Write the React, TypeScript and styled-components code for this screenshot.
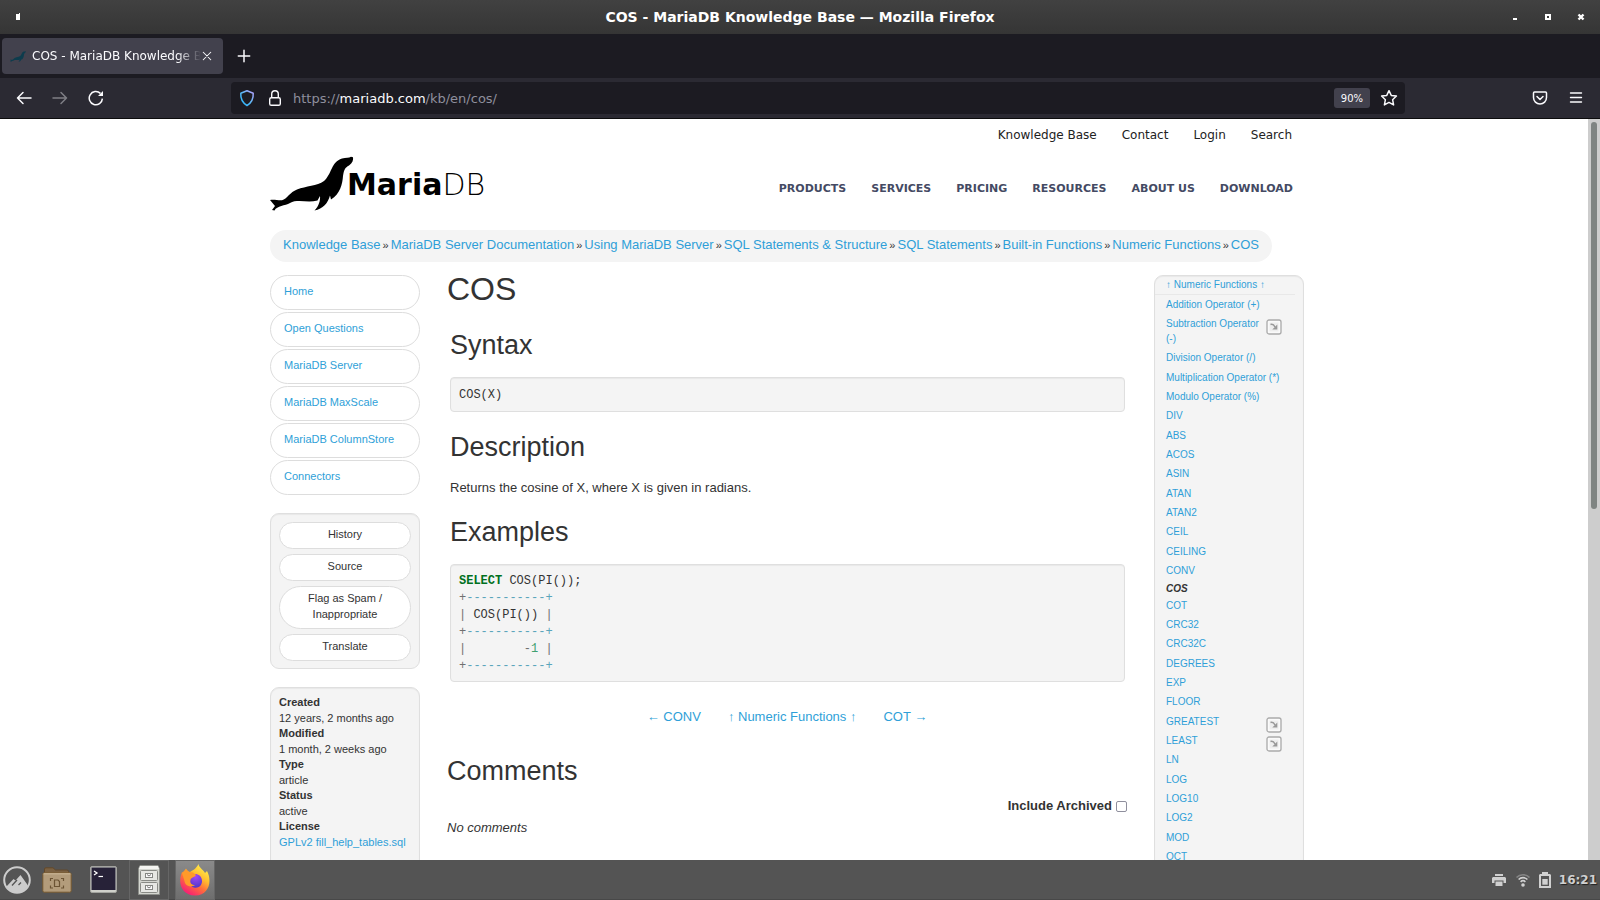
import React from "react";
import styled, { createGlobalStyle, css } from "styled-components";

const GlobalStyle = createGlobalStyle`
  *, *::before, *::after { box-sizing: border-box; }
  body { margin: 0; background: #fff; }
  ul, dl, dd, h1, h2, p, pre { margin: 0; padding: 0; }
  ul { list-style: none; }
  button { font: inherit; color: inherit; background: none; border: 0; padding: 0; }
  a { color: inherit; text-decoration: none; }
`;

const uiFont = `"DejaVu Sans", Verdana, sans-serif`;
const bodyFont = `"Liberation Sans", Arial, Helvetica, sans-serif`;
const link = "#2f9fd8";

/* ---------- window chrome ---------- */

const Desktop = styled.div`
  display: flex;
  flex-direction: column;
  height: 100vh;
  font-family: ${uiFont};
`;

const TitleBar = styled.header`
  display: grid;
  grid-template-columns: 1fr auto 1fr;
  align-items: center;
  flex: none;
  height: 34px;
  padding: 0 15px;
  background: linear-gradient(#414141, #353535);
  color: #fff;
  font-size: 14px;
  font-weight: bold;
`;

const WindowButtons = styled.div<{ $end?: boolean }>`
  display: flex;
  gap: 25px;
  justify-content: ${(p) => (p.$end ? "flex-end" : "flex-start")};
  svg { display: block; }
`;

const TabStrip = styled.div`
  display: flex;
  align-items: center;
  flex: none;
  height: 44px;
  padding: 0 2px;
  background: #1c1b22;
`;

const Tab = styled.div`
  display: flex;
  align-items: center;
  width: 221px;
  height: 36px;
  padding: 0 10px 0 8px;
  border-radius: 4px;
  background: #42414d;
  color: #fbfbfe;
  font-size: 12px;
`;

const TabTitle = styled.span`
  flex: 1;
  min-width: 0;
  margin-left: 6px;
  overflow: hidden;
  white-space: nowrap;
  mask-image: linear-gradient(to left, transparent, #000 24px);
`;

const IconButton = styled.button<{ $dim?: boolean }>`
  display: flex;
  flex: none;
  opacity: ${(p) => (p.$dim ? 0.4 : 1)};
  color: #fbfbfe;
`;

const NewTab = styled(IconButton)`
  margin-left: 14px;
`;

const NavBar = styled.div`
  display: grid;
  grid-template-columns: 231px minmax(0, 1174px) 1fr;
  align-items: center;
  flex: none;
  height: 41px;
  background: #2b2a33;
  border-bottom: 1px solid #0c0c0d;
`;

const NavGroup = styled.div<{ $end?: boolean }>`
  display: flex;
  align-items: center;
  gap: 20px;
  padding: 0 16px;
  justify-content: ${(p) => (p.$end ? "flex-end" : "flex-start")};
`;

const UrlBar = styled.div`
  display: flex;
  align-items: center;
  height: 32px;
  padding: 0 7px 0 8px;
  border-radius: 4px;
  background: #1c1b22;
  color: #fbfbfe;
`;

const UrlText = styled.span`
  flex: 1;
  padding-left: 10px;
  color: #8f8f9d;
  font-size: 13px;
  b { color: #fbfbfe; font-weight: normal; }
`;

const ShieldLock = styled.div`
  display: flex;
  gap: 12px;
`;

const ZoomBadge = styled.button`
  height: 20px;
  margin-right: 10px;
  padding: 0 7px;
  border-radius: 3px;
  background: #42414d;
  font-size: 10px;
`;

/* ---------- page ---------- */

const Viewport = styled.div`
  display: flex;
  flex: 1;
  min-height: 0;
`;

const PageScroll = styled.div`
  flex: 1;
  min-width: 0;
  overflow: hidden;
  background: #fff;
  color: #333;
  font-family: ${bodyFont};
  font-size: 13px;
  line-height: 18px;
`;

const ScrollTrack = styled.div`
  flex: none;
  width: 12px;
  padding: 3px;
  background: #cdcdcd;
`;

const ScrollThumb = styled.div`
  height: 387px;
  border-radius: 3px;
  background: #7f8482;
`;

const Container = styled.div`
  max-width: 1048px;
  margin: 0 auto;
`;

const TopMenu = styled.nav`
  display: flex;
  justify-content: flex-end;
  align-items: center;
  gap: 25px;
  height: 32px;
  padding-right: 26px;
  color: #222;
  font-family: ${uiFont};
  font-size: 12px;
`;

const SiteHeader = styled.div`
  display: flex;
  justify-content: space-between;
  padding: 5px 25px 19px 0;
  svg { display: block; }
`;

const MainMenu = styled.nav`
  display: flex;
  align-items: center;
  gap: 25px;
  padding-top: 10px;
  color: #444a63;
  font-family: ${uiFont};
  font-size: 11px;
  font-weight: bold;
`;

const Breadcrumbs = styled.nav`
  display: inline-flex;
  gap: 2px;
  height: 32px;
  margin-bottom: 13px;
  padding: 6px 13px;
  border-radius: 16px;
  background: #f4f4f4;
  white-space: nowrap;
  vertical-align: top;
  span { font-size: 11px; }
`;

const Link = styled.a`
  color: ${link};
`;

const Columns = styled.div`
  display: grid;
  grid-template-columns: 150px minmax(0, 1fr) 150px;
  column-gap: 27px;
  align-items: start;
  padding-right: 14px;
`;

const SideNav = styled.ul`
  display: grid;
  gap: 2px;
  margin-bottom: 18px;
`;

const SideLink = styled.a`
  display: block;
  height: 35px;
  padding: 6px 13px;
  border: 1px solid #ddd;
  border-radius: 18px;
  color: ${link};
  font-size: 11px;
`;

const well = css`
  border: 1px solid #dfdfdf;
  border-radius: 9px;
  background: #f4f4f4;
  box-shadow: inset 0 1px 1px rgba(0, 0, 0, 0.05);
`;

const Actions = styled.div`
  ${well}
  display: grid;
  gap: 5px;
  margin-bottom: 18px;
  padding: 8px 8px 7px;
`;

const ActionButton = styled.button`
  min-height: 27px;
  padding: 3px 20px 6px;
  border: 1px solid #ddd;
  border-radius: 22px;
  background: #fff;
  font-size: 11px;
  line-height: 16px;
`;

const Meta = styled.dl`
  ${well}
  min-height: 240px;
  padding: 7px 8px;
  font-size: 11px;
  dt { font-weight: bold; line-height: 15px; }
  dd { line-height: 16px; }
`;

const Title = styled.h1`
  font-size: 32px;
  line-height: 28px;
  font-weight: normal;
`;

const Heading = styled.h2`
  font-size: 27px;
  line-height: 32px;
  font-weight: normal;
`;

const Article = styled.article`
  padding: 7px 2px 0 3px;
  ${Heading} { margin: 19px 0 16px; }
`;

const Code = styled.pre`
  padding: 9px 8px 7px;
  border: 1px solid #dfdfdf;
  border-radius: 4px;
  background: #f4f4f4;
  box-shadow: inset 0 1px 1px rgba(0, 0, 0, 0.05);
  font-family: "Liberation Mono", "Courier New", monospace;
  font-size: 12px;
  line-height: 17px;
`;

const Query = styled(Code)`
  padding: 8px 8px 6px;
`;

const tokenColors = { key: "#007020", op: "#5aa5bb", num: "#40a070", sym: "#707070" };

const Token = styled.span<{ $kind: keyof typeof tokenColors }>`
  color: ${(p) => tokenColors[p.$kind]};
  font-weight: ${(p) => (p.$kind === "key" ? "bold" : "normal")};
`;

const Pager = styled.nav`
  display: flex;
  justify-content: center;
  gap: 27px;
  margin: 26px 0 29px;
`;

const Archived = styled.label`
  display: flex;
  justify-content: flex-end;
  align-items: center;
  gap: 4px;
  margin: 10px 0 4px;
  font-weight: bold;
  input {
    appearance: none;
    width: 11px;
    height: 11px;
    margin: 0;
    border: 1px solid #8f8f9d;
    border-radius: 2px;
    background: #fff;
  }
`;

const Index = styled.aside`
  ${well}
  height: 700px;
  font-size: 10px;
  line-height: 15px;
`;

const IndexTop = styled.a`
  display: block;
  height: 19px;
  margin-right: 8px;
  padding: 1px 11px;
  border-bottom: 1px solid #e8e8e8;
  color: ${link};
`;

const IndexItem = styled.li<{ $current?: boolean }>`
  display: flex;
  justify-content: space-between;
  padding: 2px 21px 2px 11px;
  color: ${link};
  &:nth-child(3n) { padding-bottom: 3px; }
  svg { flex: none; margin: 3px 0 -4px; }
  ${(p) => p.$current && css`
    && { padding-top: 1px; padding-bottom: 0; }
    color: #333;
    font-weight: bold;
    font-style: italic;
  `}
`;

/* ---------- taskbar ---------- */

const TaskBar = styled.footer`
  display: flex;
  align-items: center;
  justify-content: space-between;
  flex: none;
  height: 40px;
  padding-right: 3px;
  background: #545454;
  border-bottom: 1px solid #484848;
`;

const Launchers = styled.div`
  display: flex;
  align-items: center;
  gap: 6px;
`;

const Launcher = styled.button<{ $state?: "open" | "active" }>`
  display: flex;
  align-items: center;
  justify-content: center;
  width: 40px;
  height: 40px;
  border: 1px solid ${(p) => (p.$state ? "#666" : "transparent")};
  background: ${(p) => (p.$state === "active" ? "linear-gradient(#8a8a8a, #6e6e6e)" : "none")};
`;

const StartButton = styled(Launcher)`
  width: 34px;
  margin-right: -3px;
`;

const Tray = styled.div`
  display: flex;
  align-items: center;
  gap: 8px;
  color: #d0d0d0;
  font-size: 12px;
  font-weight: bold;
  text-shadow: 1px 1px 1px #222;
`;

/* ---------- drawings ---------- */

const SEAL =
  "M0 44 C4 43 7 44.5 12 44.3 C17 43 20 36 27 33.5 C36 30 47 30 54 25 C62 18 61 6 72 2.5 C76 1.5 79 2 81 .7 L83 1.3 C83.5 4 82.5 7 79 9.5 C75 11.5 74 14 73 20 C72.5 28 70 38 61 43.5 L60 39.5 C58 47 53 53 44.5 54.5 C49 50 50.5 44 50 40 L47.5 44.5 C38 47 27 43 20 47 C15 50 7 49.5 4.5 54.5 L2 54 L5 50 Z";

const Seal = ({ width, height, fill }: { width: number; height: number; fill: string }) => (
  <svg width={width} height={height} viewBox="0 0 84 55" preserveAspectRatio="none">
    <path d={SEAL} fill={fill} />
  </svg>
);

const Logo = () => (
  <svg width="222" height="55" viewBox="0 0 222 55" role="img" aria-label="MariaDB">
    <path d={SEAL} fill="#000" />
    <text x="77" y="39" fontFamily="DejaVu Sans" fontSize="30" fontWeight="bold">
      Maria<tspan fontWeight="200">DB</tspan>
    </text>
  </svg>
);

const Stroke = ({ size = 16, d, width = 1.5 }: { size?: number; d: string; width?: number }) => (
  <svg width={size} height={size} viewBox="0 0 16 16" fill="none" stroke="currentColor"
    strokeWidth={width} strokeLinecap="round" strokeLinejoin="round">
    <path d={d} />
  </svg>
);

const Shield = () => (
  <svg width="16" height="18" viewBox="0 0 16 18" fill="none">
    <defs>
      <linearGradient id="shield" x1="0" y1="1" x2="1" y2="0">
        <stop offset="0" stopColor="#1fb6ff" />
        <stop offset="0.5" stopColor="#5cb8f5" />
        <stop offset="1" stopColor="#b8a0ff" />
      </linearGradient>
    </defs>
    <path d="M8 1.7 L14.2 4.2 C14.6 10 12 14 8 16.5 C4 14 1.4 10 1.8 4.2 Z"
      stroke="url(#shield)" strokeWidth="1.5" strokeLinejoin="round" />
  </svg>
);

const Lock = () => (
  <svg width="16" height="18" viewBox="0 0 16 18" fill="none" stroke="currentColor" strokeWidth="1.4">
    <rect x="2.7" y="8.7" width="10.6" height="7.6" rx="1.6" />
    <path d="M4.7 8.7 V5 a3.3 3.3 0 0 1 6.6 0 V8.7" />
  </svg>
);

const Reload = () => (
  <svg width="16" height="16" viewBox="0 0 16 16" fill="none" stroke="currentColor" strokeWidth="1.5">
    <path d="M14.4 8.6 A6.6 6.6 0 1 1 12.4 3.4" />
    <path d="M15 1 V6 H10 Z" fill="currentColor" stroke="none" />
  </svg>
);

const JumpIcon = () => (
  <svg width="16" height="16" viewBox="0 0 16 16" fill="none">
    <rect x="1" y="1" width="14" height="14" rx="2" fill="#fafafa" stroke="#aaa" strokeWidth="1.3" />
    <rect x="3.5" y="3.5" width="9" height="9" fill="#eee" />
    <path d="M4.5 5.5 C6.5 4.8 8 6 9 8" stroke="#999" strokeWidth="1.5" />
    <path d="M11.3 5.5 V10.5 H6.3 Z" fill="#999" />
  </svg>
);

const Cinnamon = () => (
  <svg width="28" height="28" viewBox="0 0 28 28">
    <circle cx="14" cy="14" r="12.8" fill="none" stroke="#ccc" strokeWidth="2" />
    <path d="M3.5 20.5 L10.5 13 L12.5 14.5 L17.5 9 L25 19.5 A12 12 0 0 1 5 22.5 Z" fill="#ccc" />
    <path d="M9 19.5 L14 14 M15.5 19 L18 16.5" stroke="#545454" strokeWidth="1.3" />
  </svg>
);

const Folder = () => (
  <svg width="30" height="26" viewBox="0 0 30 26">
    <path d="M2.5 7 V2 Q2.5 .8 4 .8 H11 L13.5 3 H25 Q26.5 3 26.5 4.5 V8 Z" fill="#7b6142" stroke="#62482a" />
    <rect x=".8" y="5.8" width="28.4" height="19.4" rx="1.5" fill="#b39c7b" stroke="#76592f" />
    <path d="M1.5 6.8 H28.5" stroke="#d0bd9c" />
    <path d="M8.5 14 V11.5 H11 M19 11.5 H21.5 V14 M21.5 18.5 V21 H19 M11 21 H8.5 V18.5 M12.5 13 H16 L17.5 14.5 V19.5 H12.5 Z"
      fill="none" stroke="#6c5434" strokeWidth="1.2" />
  </svg>
);

const Terminal = () => (
  <svg width="27" height="27" viewBox="0 0 27 27">
    <rect x=".5" y=".5" width="26" height="26" rx="1.5" fill="#cfd0ca" stroke="#a3a49f" />
    <rect x="1.5" y="1.5" width="24" height="22.5" fill="#272238" />
    <path d="M4 5 L7 7 L4 9" fill="none" stroke="#fff" strokeWidth="1.3" />
    <path d="M8.5 10.5 H13" stroke="#fff" strokeWidth="1.2" />
  </svg>
);

const Cabinet = () => (
  <svg width="24" height="32" viewBox="0 0 24 32">
    <path d="M3 1.5 H21 L22.5 5 V30.5 H1.5 V5 Z" fill="#d4d6d0" stroke="#8d8f8a" />
    <path d="M3 2 H21 L22 5 H2 Z" fill="#f4f4f1" />
    {[6.5, 18.5].map((y) => (
      <g key={y}>
        <rect x="3.5" y={y} width="17" height="10" rx="1" fill="#e6e7e3" stroke="#888a85" />
        <rect x="8.5" y={y + 3} width="7" height="4" fill="#fafafa" stroke="#858783" />
        <path d={`M10 ${y + 4} L12 ${y + 5.5} L14 ${y + 4}`} fill="none" stroke="#777" />
      </g>
    ))}
  </svg>
);

const Firefox = () => (
  <svg width="32" height="32" viewBox="0 0 32 32">
    <defs>
      <linearGradient id="flame" x1=".85" y1=".05" x2=".25" y2="1">
        <stop offset="0" stopColor="#fff44f" />
        <stop offset=".35" stopColor="#ffbd2f" />
        <stop offset=".6" stopColor="#ff7139" />
        <stop offset="1" stopColor="#f5157c" />
      </linearGradient>
      <radialGradient id="globe" cx=".5" cy=".2" r=".8">
        <stop offset="0" stopColor="#a347f5" />
        <stop offset="1" stopColor="#4f38c9" />
      </radialGradient>
    </defs>
    <path d="M19.5 0 C20 4 25 6 26 9 L28 7 C33 16 31 31 16 31.5 C4 31 -1 21 2 11 L3 8 L4.5 9 L7 4.5 C7.5 6.5 9 7.5 11 8 C14 6 17 5 19.5 0 Z"
      fill="url(#flame)" />
    <path d="M11 12 C15 8 23 10 23 17 C23 22 19 24.5 15 23.5 C11 22.5 9.5 19 10.5 16.5 Z" fill="url(#globe)" />
    <path d="M3 9 L7 5 L10 8 L14 8.5 L17 11 C15 14 12 13 11.5 16 C10.5 19 13 21 16 21 C12 24 6 22 5.5 17 Z" fill="#ff9a2a" />
  </svg>
);

const Printer = () => (
  <svg width="16" height="14" viewBox="0 0 16 14" fill="currentColor">
    <path d="M4 1 H12 V3 H4 Z M2 4 H14 L15 5 V10 H12.5 V7.5 H3.5 V10 H1 V5 Z M4.5 8.5 H11.5 V13 H4.5 Z" />
  </svg>
);

const Wifi = () => (
  <svg width="16" height="14" viewBox="0 0 16 14" fill="none" stroke="currentColor" strokeWidth="1.6">
    <path d="M1.5 4.5 C5 .8 11 .8 14.5 4.5" opacity=".4" />
    <path d="M3.6 6.5 C6 4 10 4 12.4 6.5 M5.6 8.8 C7 7.5 9 7.5 10.4 8.8" />
    <circle cx="8" cy="12" r="1.8" fill="currentColor" stroke="none" />
  </svg>
);

const Battery = () => (
  <svg width="12" height="16" viewBox="0 0 12 16" fill="currentColor">
    <path fillRule="evenodd" d="M3 0 H9 V2 H11 L12 3 V16 H0 V3 L1 2 H3 Z M2 4 V14 H10 V4 Z" />
    <path d="M3.3 7 H8.7 V12.7 H3.3 Z" />
  </svg>
);

/* ---------- content ---------- */

const crumbs = [
  "Knowledge Base", "MariaDB Server Documentation", "Using MariaDB Server", "SQL Statements & Structure",
  "SQL Statements", "Built-in Functions", "Numeric Functions", "COS",
];

const sideLinks = ["Home", "Open Questions", "MariaDB Server", "MariaDB MaxScale", "MariaDB ColumnStore", "Connectors"];

const functions = [
  "Addition Operator (+)", "Subtraction Operator (-)", "Division Operator (/)", "Multiplication Operator (*)",
  "Modulo Operator (%)", "DIV", "ABS", "ACOS", "ASIN", "ATAN", "ATAN2", "CEIL", "CEILING", "CONV", "COS", "COT",
  "CRC32", "CRC32C", "DEGREES", "EXP", "FLOOR", "GREATEST", "LEAST", "LN", "LOG", "LOG10", "LOG2", "MOD", "OCT",
];

const withJump = new Set(["Subtraction Operator (-)", "GREATEST", "LEAST"]);

const Rule = () => (
  <><Token $kind="sym">+</Token><Token $kind="op">-----------+</Token>{"\n"}</>
);

const Pipe = () => <Token $kind="sym">|</Token>;

export default function App() {
  return (
    <Desktop>
      <GlobalStyle />
      <TitleBar>
        <WindowButtons>
          <button aria-label="Window menu">
            <svg width="6" height="8" fill="#fff"><path d="M1 1 H4 V0 H5 V7 H1 Z" /></svg>
          </button>
        </WindowButtons>
        <span>COS - MariaDB Knowledge Base — Mozilla Firefox</span>
        <WindowButtons $end>
          <button aria-label="Minimize"><svg width="8" height="8" fill="#fff"><path d="M2 5 H6 V7 H2 Z" /></svg></button>
          <button aria-label="Maximize"><svg width="8" height="8" fill="none" stroke="#fff" strokeWidth="2"><path d="M2 2 H6 V6 H2 Z" /></svg></button>
          <button aria-label="Close"><svg width="8" height="8" fill="none" stroke="#fff" strokeWidth="2.4"><path d="M1.5 1.5 L6.5 6.5 M6.5 1.5 L1.5 6.5" /></svg></button>
        </WindowButtons>
      </TitleBar>

      <TabStrip>
        <Tab>
          <Seal width={16} height={11} fill="#0d3c4d" />
          <TabTitle>COS - MariaDB Knowledge Base</TabTitle>
          <IconButton aria-label="Close tab"><Stroke size={12} d="M3 3 L13 13 M13 3 L3 13" width={1.4} /></IconButton>
        </Tab>
        <NewTab aria-label="New tab"><Stroke size={14} d="M8 1.5 V14.5 M1.5 8 H14.5" width={1.7} /></NewTab>
      </TabStrip>

      <NavBar>
        <NavGroup>
          <IconButton aria-label="Back"><Stroke d="M15 8 H1.5 M7 2.5 L1.5 8 L7 13.5" /></IconButton>
          <IconButton aria-label="Forward" $dim><Stroke d="M1 8 H14.5 M9 2.5 L14.5 8 L9 13.5" /></IconButton>
          <IconButton aria-label="Reload"><Reload /></IconButton>
        </NavGroup>
        <UrlBar>
          <ShieldLock><Shield /><Lock /></ShieldLock>
          <UrlText>https://<b>mariadb.com</b>/kb/en/cos/</UrlText>
          <ZoomBadge>90%</ZoomBadge>
          <IconButton aria-label="Bookmark">
            <Stroke size={18} d="M8 1.5 L10 5.7 L14.6 6.3 L11.2 9.5 L12.1 14.2 L8 11.9 L3.9 14.2 L4.8 9.5 L1.4 6.3 L6 5.7 Z" width={1.3} />
          </IconButton>
        </UrlBar>
        <NavGroup $end>
          <IconButton aria-label="Pocket">
            <Stroke d="M2.5 2 H13.5 Q14.5 2 14.5 3 V7.5 A6.5 6.5 0 0 1 1.5 7.5 V3 Q1.5 2 2.5 2 Z M5 6.5 L8 9.5 L11 6.5" />
          </IconButton>
          <IconButton aria-label="Menu"><Stroke d="M2.5 3 H13.5 M2.5 7.5 H13.5 M2.5 12 H13.5" width={1.4} /></IconButton>
        </NavGroup>
      </NavBar>

      <Viewport>
        <PageScroll>
          <Container>
            <TopMenu>
              {["Knowledge Base", "Contact", "Login", "Search"].map((t) => <a key={t} href="#top">{t}</a>)}
            </TopMenu>
            <SiteHeader>
              <a href="#home"><Logo /></a>
              <MainMenu>
                {["PRODUCTS", "SERVICES", "PRICING", "RESOURCES", "ABOUT US", "DOWNLOAD"].map((t) => (
                  <a key={t} href="#menu">{t}</a>
                ))}
              </MainMenu>
            </SiteHeader>
            <Breadcrumbs>
              {crumbs.map((c, i) => (
                <React.Fragment key={c}>
                  {i > 0 && <span>»</span>}
                  <Link href="#crumb">{c}</Link>
                </React.Fragment>
              ))}
            </Breadcrumbs>
            <Columns>
              <div>
                <SideNav>
                  {sideLinks.map((t) => <li key={t}><SideLink href="#side">{t}</SideLink></li>)}
                </SideNav>
                <Actions>
                  <ActionButton>History</ActionButton>
                  <ActionButton>Source</ActionButton>
                  <ActionButton>Flag as Spam / Inappropriate</ActionButton>
                  <ActionButton>Translate</ActionButton>
                </Actions>
                <Meta>
                  <dt>Created</dt><dd>12 years, 2 months ago</dd>
                  <dt>Modified</dt><dd>1 month, 2 weeks ago</dd>
                  <dt>Type</dt><dd>article</dd>
                  <dt>Status</dt><dd>active</dd>
                  <dt>License</dt><dd><Link href="#license">GPLv2 fill_help_tables.sql</Link></dd>
                </Meta>
              </div>

              <main>
                <Title>COS</Title>
                <Article>
                  <Heading>Syntax</Heading>
                  <Code>COS(X)</Code>
                  <Heading>Description</Heading>
                  <p>Returns the cosine of X, where X is given in radians.</p>
                  <Heading>Examples</Heading>
                  <Query>
                    <Token $kind="key">SELECT</Token>{" COS(PI());\n"}
                    <Rule />
                    <Pipe />{" COS(PI()) "}<Pipe />{"\n"}
                    <Rule />
                    <Pipe />{"        "}<Token $kind="sym">-</Token><Token $kind="num">1</Token>{" "}<Pipe />{"\n"}
                    <Rule />
                  </Query>
                </Article>
                <Pager>
                  <Link href="#prev">← CONV</Link>
                  <Link href="#up">↑ Numeric Functions ↑</Link>
                  <Link href="#next">COT →</Link>
                </Pager>
                <Heading>Comments</Heading>
                <Archived>Include Archived <input type="checkbox" /></Archived>
                <p><em>No comments</em></p>
              </main>

              <Index>
                <IndexTop href="#up">↑ Numeric Functions ↑</IndexTop>
                <ul>
                  {functions.map((f) => (
                    <IndexItem key={f} $current={f === "COS"}>
                      {f === "COS" ? <span>{f}</span> : <a href="#fn">{f}</a>}
                      {withJump.has(f) && <JumpIcon />}
                    </IndexItem>
                  ))}
                </ul>
              </Index>
            </Columns>
          </Container>
        </PageScroll>
        <ScrollTrack><ScrollThumb /></ScrollTrack>
      </Viewport>

      <TaskBar>
        <Launchers>
          <StartButton aria-label="Menu"><Cinnamon /></StartButton>
          <Launcher aria-label="Files"><Folder /></Launcher>
          <Launcher aria-label="Terminal"><Terminal /></Launcher>
          <Launcher aria-label="File manager" $state="open"><Cabinet /></Launcher>
          <Launcher aria-label="Firefox" $state="active"><Firefox /></Launcher>
        </Launchers>
        <Tray><Printer /><Wifi /><Battery /><span>16:21</span></Tray>
      </TaskBar>
    </Desktop>
  );
}
